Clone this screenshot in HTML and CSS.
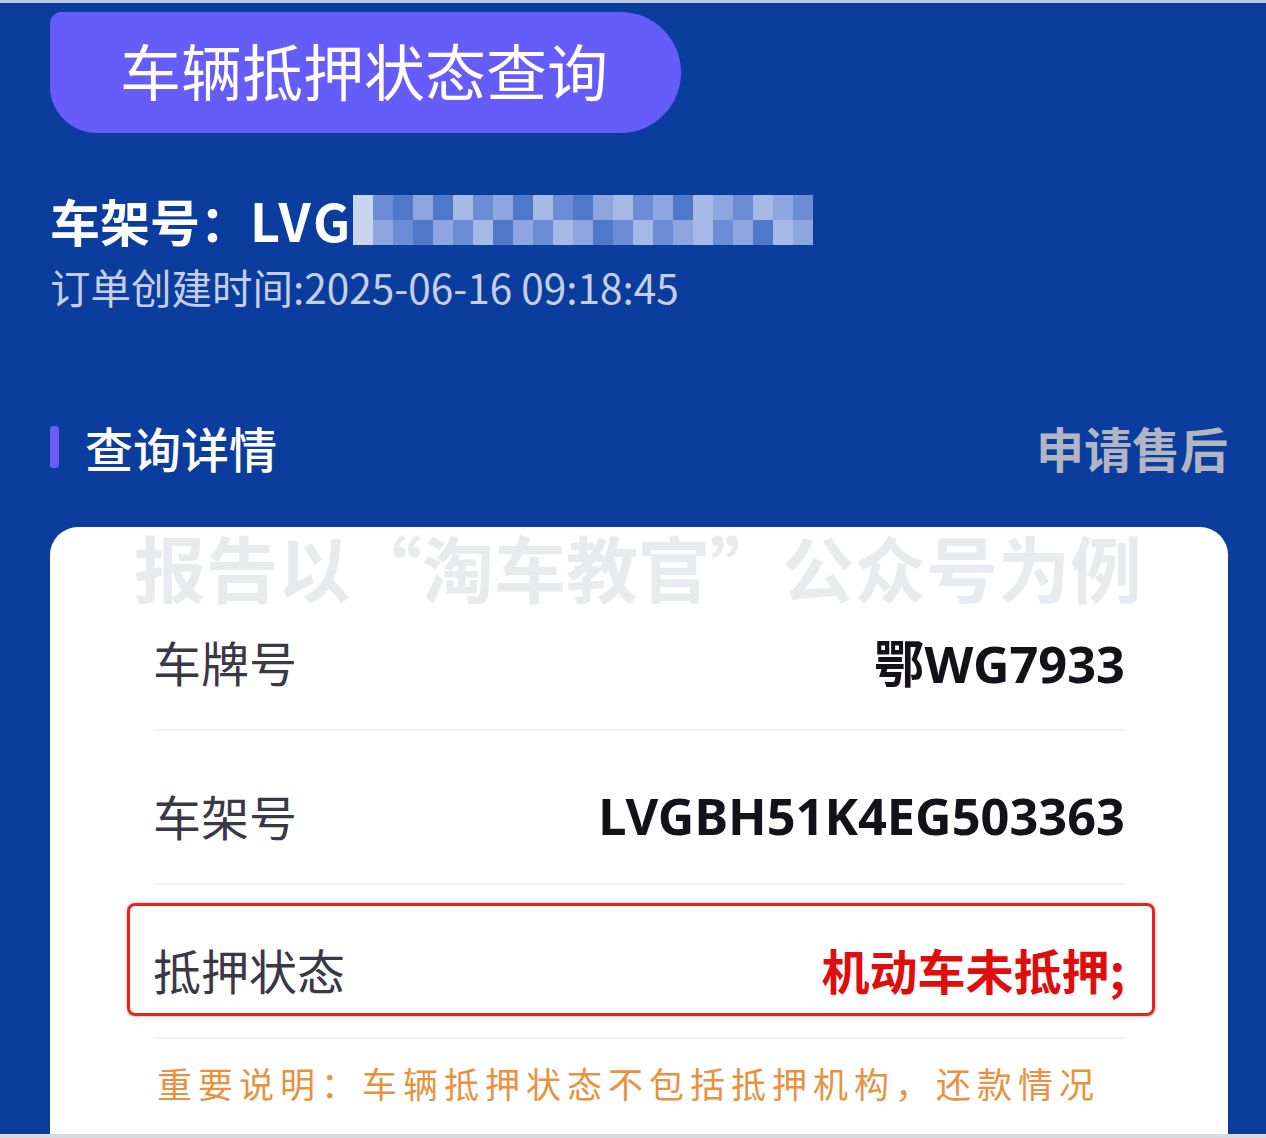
FILE: index.html
```html
<!DOCTYPE html>
<html lang="zh-CN">
<head>
<meta charset="utf-8">
<title>车辆抵押状态查询</title>
<link rel="stylesheet" href="styles.css">
</head>
<body>
<div class="topline"></div>
<div class="page">
  <div class="pill">车辆抵押状态查询</div>
  <div class="vin-line">
    <span class="vin-label">车架号：<span class="vin-prefix">LVG</span></span>
    <span class="mosaic">
      <i class="c5"></i><i class="c2"></i><i class="c1"></i><i class="c3"></i><i class="c1"></i><i class="c4"></i><i class="c2"></i><i class="c3"></i><i class="c1"></i><i class="c4"></i><i class="c2"></i><i class="c1"></i><i class="c3"></i><i class="c4"></i><i class="c2"></i><i class="c3"></i><i class="c1"></i><i class="c4"></i><i class="c3"></i><i class="c2"></i><i class="c4"></i><i class="c3"></i><i class="c2"></i>
      <i class="c5"></i><i class="c3"></i><i class="c2"></i><i class="c1"></i><i class="c3"></i><i class="c2"></i><i class="c4"></i><i class="c1"></i><i class="c3"></i><i class="c2"></i><i class="c4"></i><i class="c3"></i><i class="c1"></i><i class="c2"></i><i class="c4"></i><i class="c2"></i><i class="c3"></i><i class="c4"></i><i class="c2"></i><i class="c3"></i><i class="c1"></i><i class="c4"></i><i class="c3"></i>
    </span>
  </div>
  <div class="created">订单创建时间:2025-06-16 09:18:45</div>
  <div class="section-head">
    <div class="section-title"><span class="bar"></span>查询详情</div>
    <div class="after-sale">申请售后</div>
  </div>
  <div class="card">
    <div class="watermark">报告以“淘车教官”公众号为例</div>
    <div class="row">
      <span class="label">车牌号</span>
      <span class="value">鄂WG7933</span>
    </div>
    <div class="row">
      <span class="label">车架号</span>
      <span class="value">LVGBH51K4EG503363</span>
    </div>
    <div class="row row-marked">
      <span class="label">抵押状态</span>
      <span class="value value-red">机动车未抵押;</span>
    </div>
    <div class="note">重要说明：车辆抵押状态不包括抵押机构，还款情况</div>
  </div>
</div>
<div class="bottomline"></div>
</body>
</html>
```
FILE: styles.css
```css
* { box-sizing: border-box; margin: 0; padding: 0; }
html, body { background: #0a3d9e; }
body {
  width: 1266px;
  height: 1138px;
  overflow: hidden;
  font-family: "Noto Sans CJK SC", "Noto Sans", sans-serif;
}
.topline { height: 3px; background: #b9c6dd; }
.page {
  height: 1131px;
  overflow: hidden;
  padding: 0 38px 0 50px;
}
.pill {
  margin-top: 9px;
  width: 631px;
  height: 121px;
  background: #655cfa;
  border-radius: 12px 62px 62px 48px;
  color: #ffffff;
  font-size: 61px;
  line-height: 115px;
  padding-left: 70px;
  font-weight: 400;
  white-space: nowrap;
}
.vin-line {
  margin-top: 57px;
  height: 60px;
  display: flex;
  align-items: center;
}
.vin-label {
  color: #ffffff;
  font-size: 50px;
  font-weight: 700;
  line-height: 60px;
  white-space: nowrap;
}
.vin-prefix {
  font-size: 52px;
  letter-spacing: 3px;
}
.mosaic {
  display: grid;
  grid-template-columns: repeat(23, 20px);
  grid-template-rows: 25px 25px;
  height: 50px;
}
.mosaic i { display: block; }
.c1 { background: #5078c9; }
.c2 { background: #6d8cd6; }
.c3 { background: #8ea6e0; }
.c4 { background: #a6b8e6; }
.c5 { background: #c9d4ef; }
.created {
  margin-top: 12px;
  color: #c6cfe9;
  font-size: 40.5px;
  line-height: 50px;
  white-space: nowrap;
}
.section-head {
  margin-top: 105px;
  height: 60px;
  display: flex;
  justify-content: space-between;
  align-items: center;
}
.section-title {
  display: flex;
  align-items: center;
  color: #ffffff;
  font-size: 48px;
  font-weight: 500;
}
.bar {
  width: 9px;
  height: 42px;
  border-radius: 3px;
  background: #6a5cf5;
  margin-right: 26px;
}
.after-sale {
  color: #b3b6c2;
  font-size: 48px;
  font-weight: 700;
}
.card {
  position: relative;
  margin-top: 50px;
  width: 1178px;
  height: 700px;
  background: #ffffff;
  border-radius: 28px 28px 0 0;
  padding: 50px 103px 0;
}
.watermark {
  position: absolute;
  top: -14px;
  left: 84px;
  color: #e9eaed;
  font-size: 72px;
  font-weight: 700;
  white-space: nowrap;
}
.row {
  position: relative;
  height: 154px;
  padding-top: 16px;
  border-bottom: 2px solid #f1f2f5;
  display: flex;
  justify-content: space-between;
  align-items: center;
}
.label {
  color: #3b3845;
  font-size: 48px;
  font-weight: 400;
}
.value {
  color: #141218;
  font-family: "Noto Sans", "Noto Sans CJK SC", sans-serif;
  font-size: 50.5px;
  font-weight: 700;
}
.value-red {
  color: #e00d0d;
  font-size: 48px;
  font-family: "Noto Sans CJK SC", sans-serif;
}
.row-marked::after {
  content: "";
  position: absolute;
  top: 18px;
  bottom: 21px;
  left: -26px;
  right: -30px;
  border: 3px solid #e3261d;
  border-radius: 8px;
  box-shadow: 0 0 3px rgba(227, 38, 29, 0.5);
}
.note {
  margin-top: 21px;
  color: #e8913f;
  font-size: 35px;
  line-height: 46px;
  letter-spacing: 6px;
  padding-left: 4px;
  white-space: nowrap;
}
.bottomline { height: 4px; background: #d9dae0; }
```
